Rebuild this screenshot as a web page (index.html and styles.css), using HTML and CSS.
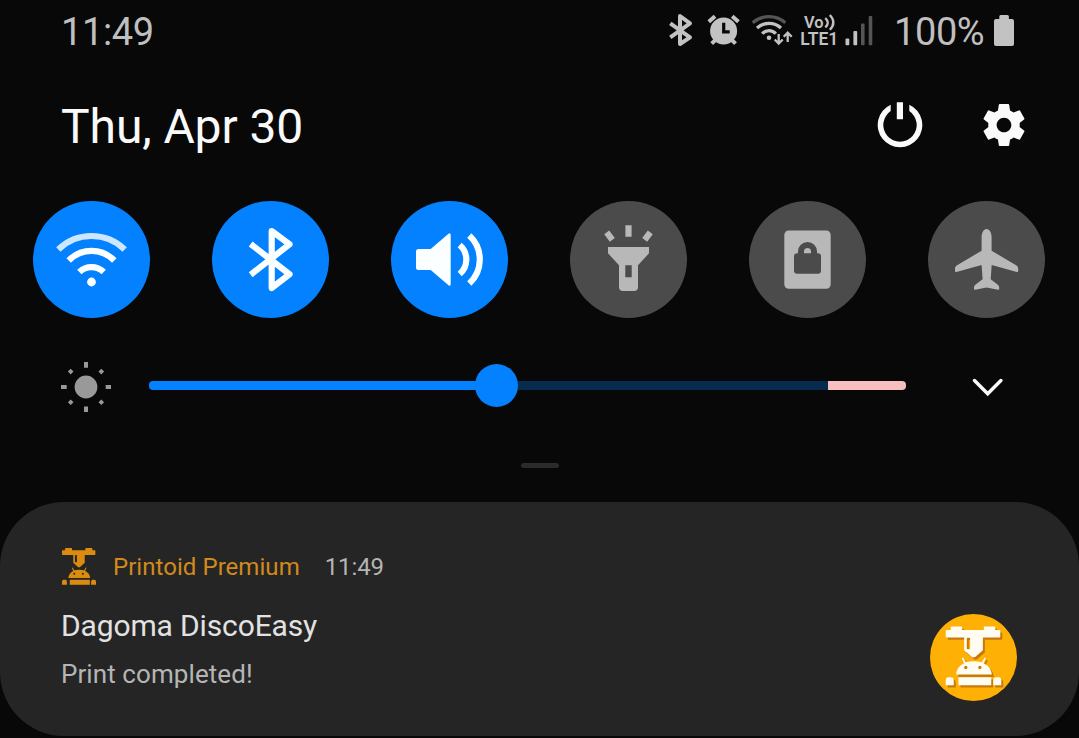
FILE: index.html
```html
<!DOCTYPE html>
<html lang="en">
<head>
<meta charset="utf-8">
<title>Quick settings</title>
<link rel="stylesheet" href="styles.css">
</head>
<body>
<svg class="defs" width="0" height="0" aria-hidden="true">
  <defs>
    <g id="printoid" fill-rule="evenodd">
      <path d="M122 81q0-2 2-2h30q2 0 2 2v9h65v-9q0-2 2-2h30q2 0 2 2v9h12q3 0 3 3v16q0 3-3 3h-49v38l-24 21h-8l-24-21v-38h-52q-3 0-3-3v-16q0-3 3-3h12zM170 116v28q0 3 3 3h4q3 0 3-3v-28q0-3-3-3h-4q-3 0-3 3z"/>
      <path d="M138 223q2-24 24-34l-7-15 4-2 8 14q24-6 48 0l8-14 4 2-7 15q22 10 25 34zM162 202a5 5 0 1 0 10 0a5 5 0 1 0-10 0zM204 202a5 5 0 1 0 10 0a5 5 0 1 0-10 0z"/>
      <path d="M145 231h98v24h-98z"/>
      <path d="M107 255v-14q0-10 8-10h8q8 0 8 10v14zM249 255v-14q0-10 8-10h8q8 0 8 10v14z"/>
    </g>
  </defs>
</svg>
<main class="panel">
  <header class="status">
    <span class="clock">11:49</span>
    <svg class="status-icons" viewBox="664 8 216 44">
      <path class="line" stroke-width="4" stroke-linejoin="round" d="M670.3 23.3L690 37.3L680 44V16L690 23.3L670.3 37.3"/>
      <circle cx="723.6" cy="31" r="13.5"/>
      <path class="line" stroke-width="4" d="M708.8 21.7l6.2-5.5M732.2 16.2l6.2 5.5M711.7 43.7l4-4M735.5 43.7l-4-4"/>
      <path class="hands" d="M723.7 22.7v9.2h6"/>
      <path class="line dim" stroke-width="3.2" d="M752.7 22.7A25 25 0 0 1 785.3 22.7"/>
      <path class="line" stroke-width="3.2" d="M757 28A17.7 17.7 0 0 1 781 28M762.2 33.7A9 9 0 0 1 775.8 33.7"/>
      <circle cx="769" cy="37.7" r="2.3"/>
      <path class="line" stroke-width="2.3" d="M778.7 34v9M774.7 39.5l4 4 4-4M787.7 42v-9M783.7 36.7l4-4 4 4"/>
      <text x="804" y="27.8" font-size="17" textLength="19.5" lengthAdjust="spacingAndGlyphs">Vo</text>
      <path class="line" stroke-width="2.3" d="M825.3 18.2q5 4.6 0 9.2M829.8 15q7.2 7.4 0 14.8"/>
      <text x="800.3" y="45.1" font-size="18" textLength="38" lengthAdjust="spacingAndGlyphs">LTE1</text>
      <rect x="845.5" y="38.5" width="3.8" height="6.7" rx="1"/>
      <rect x="853.4" y="31" width="3.8" height="14.2" rx="1"/>
      <rect class="off" x="861" y="23.5" width="3.6" height="21.7" rx="1"/>
      <rect class="off" x="868.7" y="16" width="3.6" height="29.2" rx="1"/>
    </svg>
    <span class="percent">100%</span>
    <svg class="battery" viewBox="0 0 20 31"><path d="M5.3 4V1.5q0-1.5 1.5-1.5h6.6q1.5 0 1.5 1.5V4H18q2 0 2 2v23q0 2-2 2H2q-2 0-2-2V6q0-2 2-2z"/></svg>
  </header>

  <section class="heading">
    <h1 class="date">Thu, Apr 30</h1>
    <svg class="power" viewBox="-23 -23 46 46"><path d="M-9.3-20.3A22.3 22.3 0 1 0 9.3-20.3V-13.9A16.7 16.7 0 1 1-9.3-13.9zM-3.2-22.7h6.2v17h-6.2z"/></svg>
    <svg class="gear" viewBox="2 2 20 20"><path d="M19.43 12.98c.04-.32.07-.64.07-.98s-.03-.66-.07-.98l2.11-1.65c.19-.15.24-.42.12-.64l-2-3.46c-.12-.22-.39-.3-.61-.22l-2.49 1c-.52-.4-1.08-.73-1.69-.98l-.38-2.65C14.46 2.18 14.25 2 14 2h-4c-.25 0-.46.18-.49.42l-.38 2.65c-.61.25-1.17.59-1.69.98l-2.49-1c-.23-.09-.49 0-.61.22l-2 3.46c-.13.22-.07.49.12.64l2.11 1.65c-.04.32-.07.65-.07.98s.03.66.07.98l-2.11 1.65c-.19.15-.24.42-.12.64l2 3.46c.12.22.39.3.61.22l2.49-1c.52.4 1.08.73 1.69.98l.38 2.65c.03.24.24.42.49.42h4c.25 0 .46-.18.49-.42l.38-2.65c.61-.25 1.17-.59 1.69-.98l2.49 1c.23.09.49 0 .61-.22l2-3.46c.12-.22.07-.49-.12-.64l-2.11-1.65zM12 15.5c-1.93 0-3.5-1.57-3.5-3.5s1.57-3.5 3.5-3.5 3.5 1.57 3.5 3.5-1.57 3.5-3.5 3.5z"/></svg>
  </section>

  <section class="tiles">
    <svg class="tile on" viewBox="0 0 117 117">
      <path class="stroke faint" d="M25.3 48.5A47.6 47.6 0 0 1 91.7 48.5"/>
      <path class="stroke" d="M35.7 59.5A31.9 31.9 0 0 1 81.3 59.5M46.3 71A17.8 17.8 0 0 1 70.7 71"/>
      <circle cx="58.5" cy="81" r="4.4"/>
    </svg>
    <svg class="tile on" viewBox="0 0 117 117">
      <path class="stroke" stroke-linejoin="round" d="M38.7 43L77.5 73.3L59.7 87V30L77.5 43.3L38.7 73.7"/>
    </svg>
    <svg class="tile on" viewBox="0 0 117 117">
      <path d="M27.5 48H39.7L57.5 32.8Q59.7 31.3 59.7 34V83Q59.7 85.7 57.5 84.2L39.7 69H27.5Q25 69 25 66.5V50.5Q25 48 27.5 48z"/>
      <path class="stroke" d="M68.7 44A19.2 19.2 0 0 1 68.7 73M78.3 34.5A32.7 32.7 0 0 1 78.3 82.5"/>
    </svg>
    <svg class="tile" viewBox="0 0 117 117">
      <path fill-rule="evenodd" d="M38 46H79V52.3L68 64.3V86Q68 90 64 90H53Q49 90 49 86V64.3L38 52.3zM55.3 64.3V76.3H61.7V64.3z"/>
      <path class="stroke" d="M58.5 24.3V35.7M36.7 31.3L42.3 38.9M80.3 31.3L74.7 38.9"/>
    </svg>
    <svg class="tile" viewBox="0 0 117 117">
      <rect x="35.3" y="29.4" width="46.4" height="58.3" rx="4.5"/>
      <rect class="cut" x="45" y="52.3" width="27" height="20.4" rx="3"/>
      <path class="cut-line" d="M52 54V50.5a6.5 6.5 0 0 1 13 0V54"/>
    </svg>
    <svg class="tile" viewBox="0 0 117 117">
      <path d="M58.6 28C61.7 28 63.6 32 63.6 36V49.7L88.5 64.5Q90.2 65.5 90.2 67.5V70Q90.2 71.2 88.8 70.9L63.7 64L62.7 78.3L69.5 83.5Q71.2 84.8 71.2 86.3V88Q71.2 89 70 88.8L58.6 86.6L47.2 88.8Q46 89 46 88V86.3Q46 84.8 47.7 83.5L54.6 78.3L53.6 64L28.4 70.9Q27 71.2 27 70V67.5Q27 65.5 28.7 64.5L53.6 49.7V36C53.6 32 55.5 28 58.6 28z"/>
    </svg>
  </section>

  <section class="brightness">
    <svg class="sun" viewBox="61 362 50 50">
      <circle cx="86" cy="387" r="11.4"/>
      <path d="M84 362h4v5.7h-4zM84 406.5h4v5.5h-4zM61 385h5.7v4H61zM105.7 385h5.5v4h-5.5zM70.7 368.8l2.8 2.8-2.8 2.8-2.8-2.8zM101.3 368.8l2.8 2.8-2.8 2.8-2.8-2.8zM70.7 399.5l2.8 2.8-2.8 2.8-2.8-2.8zM101.3 399.5l2.8 2.8-2.8 2.8-2.8-2.8z"/>
    </svg>
    <div class="slider">
      <div class="track"><span class="fill"></span><span class="rest"></span><span class="warn"></span></div>
      <span class="thumb"></span>
    </div>
    <svg class="chevron" viewBox="0 0 31 20"><path d="M2.5 3.5L15.7 16.8L28.9 3.5"/></svg>
  </section>

  <div class="handle"></div>

  <article class="card">
    <div class="card-text">
      <div class="app">
        <svg class="app-icon" viewBox="107 79 166 177" preserveAspectRatio="none"><use href="#printoid"/></svg>
        <span class="app-name">Printoid Premium</span>
        <span class="time">11:49</span>
      </div>
      <h2 class="title">Dagoma DiscoEasy</h2>
      <p class="message">Print completed!</p>
    </div>
    <svg class="badge" viewBox="60 42 260 260">
      <circle cx="190" cy="172" r="130" fill="#ffb005"/>
      <use href="#printoid" x="6" y="7" fill="#c9780c"/>
      <use href="#printoid" fill="#fffdf2"/>
    </svg>
  </article>
</main>
</body>
</html>
```

FILE: styles.css
```css
* { box-sizing: border-box; }

body {
  margin: 0;
  background: #080808;
  font-family: Roboto, sans-serif;
}

svg { display: block; flex: none; }

.defs { position: absolute; }

.panel {
  display: flex;
  flex-direction: column;
  width: 1079px;
  height: 738px;
  overflow: hidden;
}

.status {
  display: flex;
  align-items: center;
  height: 64px;
  padding: 0 65px 0 61px;
  font-size: 38px;
  line-height: 64px;
  letter-spacing: -0.4px;
  color: #bfbfbf;
}

.clock { flex: 1; }

.status-icons {
  width: 216px;
  height: 44px;
  margin-bottom: 4px;
  fill: #c2c2c2;
  font-weight: 600;
  letter-spacing: 0;
}

.line { fill: none; stroke: #c2c2c2; }
.line.dim { stroke: #555; }
.hands { fill: none; stroke: #080808; stroke-width: 3.2; }
.off { fill: #555; }

.percent {
  width: 101px;
  margin-left: 14px;
  white-space: nowrap;
}

.battery {
  width: 20px;
  height: 31px;
  margin-bottom: 4px;
  margin-left: -1px;
  fill: #c2c2c2;
}

.heading {
  display: flex;
  align-items: center;
  height: 137px;
  padding: 0 54px 15px 61px;
}

.date {
  flex: 1;
  margin: 0;
  padding-top: 3px;
  font-size: 48px;
  font-weight: 400;
  line-height: 56px;
  letter-spacing: -0.1px;
  color: #fafafa;
}

.power { width: 46px; height: 46px; margin-bottom: 1px; fill: #fafafa; }
.gear { width: 42px; height: 42px; margin-bottom: 1px; margin-left: 60px; fill: #fafafa; }

.tiles {
  display: flex;
  justify-content: space-between;
  padding: 0 34px 0 33px;
}

.tile {
  width: 117px;
  height: 117px;
  border-radius: 50%;
  background: #4b4b4b;
  fill: #b8b8b8;
  stroke: none;
}

.stroke { fill: none; stroke: #b8b8b8; stroke-width: 6.2; }
.cut { fill: #4b4b4b; }
.cut-line { fill: none; stroke: #4b4b4b; stroke-width: 6; }

.tile.on { background: #0381fe; fill: #fcffff; }
.tile.on .stroke { stroke: #fcffff; }
.tile.on .faint { stroke: #cbe6ff; }

.brightness {
  display: flex;
  align-items: center;
  height: 135px;
  padding: 0 76px 0 61px;
}

.sun { width: 50px; height: 50px; margin-top: 3px; fill: #999; }

.slider {
  position: relative;
  width: 757px;
  margin-left: 38px;
}

.track {
  display: flex;
  height: 9px;
  border-radius: 4px;
  overflow: hidden;
}

.fill { width: 347px; background: #0381fe; }
.rest { flex: 1; background: #062b4e; }
.warn { width: 78px; background: #f7c0be; }

.thumb {
  position: absolute;
  top: -17px;
  left: 326px;
  width: 43px;
  height: 43px;
  border-radius: 50%;
  background: #0381fe;
}

.chevron {
  width: 31px;
  height: 20px;
  margin-top: 3px;
  margin-left: 66px;
  fill: none;
  stroke: #fafafa;
  stroke-width: 3.4;
  stroke-linecap: round;
}

.handle {
  width: 38px;
  height: 5px;
  margin: 10px 0 34px 521px;
  border-radius: 3px;
  background: #2b2b2b;
}

.card {
  display: flex;
  justify-content: space-between;
  height: 234px;
  padding: 46px 62px 0 61px;
  border-radius: 64px;
  background: #252525;
}

.app {
  display: flex;
  align-items: center;
  height: 37px;
  font-size: 24px;
}

.app-icon { width: 34px; height: 37px; margin-left: 1px; fill: #db8c10; }
.app-name { margin-left: 17px; letter-spacing: 0.05px; color: #d28a1c; }
.time { margin-left: 25px; letter-spacing: -0.1px; color: #b5b5b5; }

.title {
  margin: 23px 0 0;
  font-size: 30px;
  font-weight: 400;
  line-height: 36px;
  letter-spacing: -0.14px;
  color: #e2e2e2;
}

.message {
  margin: 14px 0 0;
  font-size: 26px;
  line-height: 32px;
  letter-spacing: 0.08px;
  color: #b5b5b5;
}

.badge { width: 87px; height: 87px; margin-top: 66px; }
```
